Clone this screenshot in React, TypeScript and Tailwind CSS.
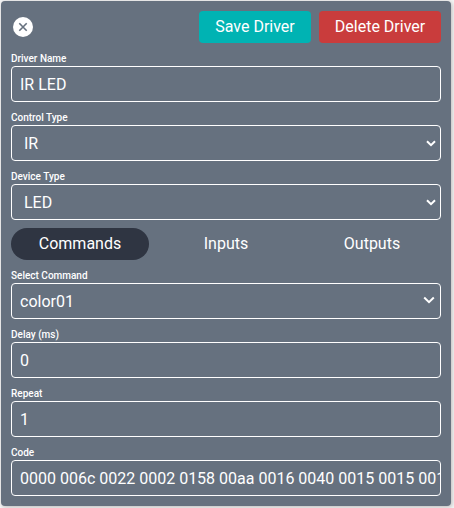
import type { ReactNode } from "react";

const boxClass =
  "flex h-9 items-center overflow-hidden rounded-[4px] border border-white text-base whitespace-nowrap";

function Field({ label, children }: { label: string; children: ReactNode }) {
  return (
    <div>
      <div className="h-[15px] text-[10px] leading-[15px] font-medium">{label}</div>
      {children}
    </div>
  );
}

function TextBox({ value }: { value: string }) {
  return <div className={`${boxClass} pt-0.5 pl-2`}>{value}</div>;
}

function Chevron() {
  return (
    <svg width="10" height="7" viewBox="0 0 10 7" fill="none" className="shrink-0">
      <path d="M1 1.2L5 5.2L9 1.2" stroke="white" strokeWidth="2" />
    </svg>
  );
}

function NativeSelect({ value }: { value: string }) {
  return (
    <div className={`${boxClass} justify-between pr-1 pl-3`}>
      <span className="pt-0.5">{value}</span>
      <Chevron />
    </div>
  );
}

export default function App() {
  return (
    <div className="h-[508px] w-[454px] bg-[#f5f5f5] pt-px pl-px font-['Roboto',sans-serif] text-white">
      <div className="flex h-[505px] w-[450px] flex-col gap-2 rounded-[4px] bg-[#66717f] p-2.5 shadow-[1px_1px_4px_rgba(0,0,0,0.25)]">
        <div className="flex h-8 items-center gap-2">
          <svg width="20" height="20" viewBox="0 0 20 20" className="mr-auto ml-0.5">
            <circle cx="10" cy="10" r="10" fill="white" />
            <path d="M6.3 6.3L13.7 13.7M13.7 6.3L6.3 13.7" stroke="#66717f" strokeWidth="1.6" />
          </svg>
          <button className="h-8 w-28 rounded-[4px] bg-[#00b3b3] text-base">Save Driver</button>
          <button className="h-8 w-[122px] rounded-[4px] bg-[#c93c3c] text-base">Delete Driver</button>
        </div>
        <Field label="Driver Name">
          <TextBox value="IR LED" />
        </Field>
        <Field label="Control Type">
          <NativeSelect value="IR" />
        </Field>
        <Field label="Device Type">
          <NativeSelect value="LED" />
        </Field>
        <div className="grid h-8 grid-cols-3 gap-2 text-base">
          <button className="rounded-full bg-[#2f3542]">Commands</button>
          <button className="rounded-full">Inputs</button>
          <button className="rounded-full">Outputs</button>
        </div>
        <Field label="Select Command">
          <div className={`${boxClass} justify-between pr-[5px] pl-2`}>
            <span className="pt-0.5">color01</span>
            <svg width="12" height="8" viewBox="0 0 12 8" fill="none" className="mb-0.5 shrink-0">
              <path d="M1.2 1.5L6 6.2L10.8 1.5" stroke="white" strokeWidth="2" />
            </svg>
          </div>
        </Field>
        <Field label="Delay (ms)">
          <TextBox value="0" />
        </Field>
        <Field label="Repeat">
          <TextBox value="1" />
        </Field>
        <Field label="Code">
          <TextBox value="0000 006c 0022 0002 0158 00aa 0016 0040 0015 0015 0015 0015" />
        </Field>
      </div>
    </div>
  );
}
